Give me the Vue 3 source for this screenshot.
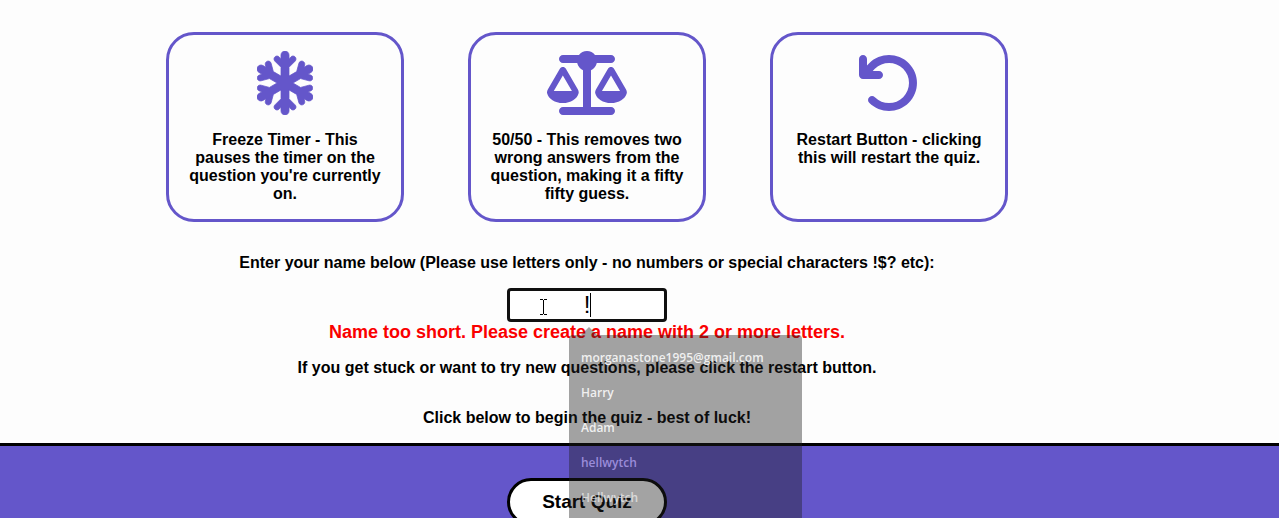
<script setup>
import { ref } from 'vue'

const playerName = ref('!')

const helpers = [
  {
    text: "Freeze Timer - This pauses the timer on the question you're currently on.",
    icon: 'snowflake',
  },
  {
    text: '50/50 - This removes two wrong answers from the question, making it a fifty fifty guess.',
    icon: 'scale',
  },
  {
    text: 'Restart Button - clicking this will restart the quiz.',
    icon: 'restart',
  },
]

const suggestions = [
  { text: 'morganastone1995@gmail.com', tone: 'bright' },
  { text: 'Harry', tone: 'bright' },
  { text: 'Adam', tone: 'bright' },
  { text: 'hellwytch', tone: 'tinted' },
  { text: 'Hellwytch', tone: 'faint' },
]
</script>

<template>
  <main class="page">
    <section class="intro">
      <div class="cards">
        <article v-for="helper in helpers" :key="helper.icon" class="card">
          <svg v-if="helper.icon === 'snowflake'" class="icon" viewBox="0 0 448 512" aria-hidden="true">
            <path fill="currentColor" stroke="currentColor" stroke-width="6" d="M224 0c17.7 0 32 14.3 32 32V62.1l15-15c9.4-9.4 24.6-9.4 33.9 0s9.4 24.6 0 33.9l-49 49v70.3l61.4-35.8 17.7-66.1c3.4-12.8 16.6-20.4 29.4-17s20.4 16.6 17 29.4l-5.2 19.3 23.6-13.8c15.3-8.9 34.9-3.7 43.8 11.5s3.8 34.9-11.5 43.8l-25.3 14.8 21.7 5.8c12.8 3.4 20.4 16.6 17 29.4s-16.6 20.4-29.4 17l-67.7-18.1L287.5 256l60.9 35.5 67.7-18.1c12.8-3.4 26 4.2 29.4 17s-4.2 26-17 29.4l-21.7 5.8 25.3 14.8c15.3 8.9 20.4 28.5 11.5 43.8s-28.5 20.4-43.8 11.5l-23.6-13.8 5.2 19.3c3.4 12.8-4.2 26-17 29.4s-26-4.2-29.4-17l-17.7-66.1L256 311.7v70.3l49 49c9.4 9.4 9.4 24.6 0 33.9s-24.6 9.4-33.9 0l-15-15V480c0 17.7-14.3 32-32 32s-32-14.3-32-32V449.9l-15 15c-9.4 9.4-24.6 9.4-33.9 0s-9.4-24.6 0-33.9l49-49V311.7l-61.4 35.8-17.7 66.1c-3.4 12.8-16.6 20.4-29.4 17s-20.4-16.6-17-29.4l5.2-19.3L48.1 395.6c-15.3 8.9-34.9 3.7-43.8-11.5s-3.7-34.9 11.5-43.8l25.3-14.8-21.7-5.8c-12.8-3.4-20.4-16.6-17-29.4s16.6-20.4 29.4-17l67.7 18.1L160.5 256 99.6 220.5 31.9 238.6c-12.8 3.4-26-4.2-29.4-17s4.2-26 17-29.4l21.7-5.8L15.9 171.6C.6 162.7-4.5 143.1 4.4 127.9s28.5-20.4 43.8-11.5l23.6 13.8-5.2-19.3c-3.4-12.8 4.2-26 17-29.4s26 4.2 29.4 17l17.7 66.1L192 200.3V130L143 81c-9.4-9.4-9.4-24.6 0-33.9s24.6-9.4 33.9 0l15 15V32c0-17.7 14.3-32 32-32z" />
          </svg>
          <svg v-else-if="helper.icon === 'scale'" class="icon" viewBox="0 0 640 512" aria-hidden="true">
            <path fill="currentColor" d="M384 32H512c17.7 0 32 14.3 32 32s-14.3 32-32 32H398.4c-5.2 25.8-22.9 47.1-46.4 57.3V448H512c17.7 0 32 14.3 32 32s-14.3 32-32 32H320 128c-17.7 0-32-14.3-32-32s14.3-32 32-32H288V153.3c-23.5-10.3-41.2-31.6-46.4-57.3H128c-17.7 0-32-14.3-32-32s14.3-32 32-32H256c14.6-19.4 37.8-32 64-32s49.4 12.6 64 32zm55.6 288H584.4L512 195.8 439.6 320zM512 416c-62.9 0-115.2-34-126-78.9c-2.6-11 1-22.3 6.7-32.1l95.2-163.2c5-8.6 14.2-13.8 24.1-13.8s19.1 5.3 24.1 13.8l95.2 163.2c5.7 9.8 9.3 21.1 6.7 32.1C627.2 382 574.9 416 512 416zM126.8 195.8L54.4 320H199.3L126.8 195.8zM.9 337.1c-2.6-11 1-22.3 6.7-32.1l95.2-163.2c5-8.6 14.2-13.8 24.1-13.8s19.1 5.3 24.1 13.8l95.2 163.2c5.7 9.8 9.3 21.1 6.7 32.1C242 382 189.7 416 126.8 416S11.7 382 .9 337.1z" />
          </svg>
          <svg v-else class="icon" viewBox="0 0 512 512" aria-hidden="true">
            <path fill="currentColor" d="M125.7 160H176c17.7 0 32 14.3 32 32s-14.3 32-32 32H48c-17.7 0-32-14.3-32-32V64c0-17.7 14.3-32 32-32s32 14.3 32 32v51.2L97.6 97.6c87.5-87.5 229.3-87.5 316.8 0s87.5 229.3 0 316.8s-229.3 87.5-316.8 0c-12.5-12.5-12.5-32.8 0-45.3s32.8-12.5 45.3 0c62.5 62.5 163.8 62.5 226.3 0s62.5-163.8 0-226.3s-163.8-62.5-226.3 0L125.7 160z" />
          </svg>
          <p class="card-text">{{ helper.text }}</p>
        </article>
      </div>

      <label class="prompt" for="player-name">Enter your name below (Please use letters only - no numbers or special characters !$? etc):</label>
      <div class="field">
        <input id="player-name" v-model="playerName" class="name-input" type="text" autocomplete="off" aria-describedby="name-error" />
        <span class="caret"></span>
        <svg class="pointer" viewBox="0 0 7 16" aria-hidden="true">
          <path d="M0 .5h3M4 .5h3M3.5 1v14M0 15.5h3M4 15.5h3" fill="none" stroke="#000" />
        </svg>
        <ul class="suggestions">
          <li v-for="item in suggestions" :key="item.text" :class="['suggestion', item.tone]">{{ item.text }}</li>
        </ul>
      </div>
      <p id="name-error" class="error">Name too short. Please create a name with 2 or more letters.</p>
      <p class="stuck">If you get stuck or want to try new questions, please click the restart button.</p>
      <p class="begin">Click below to begin the quiz - best of luck!</p>
    </section>

    <footer class="footer">
      <button class="start" type="button">Start Quiz</button>
    </footer>
  </main>
</template>

<style>
body {
  margin: 0;
  background: #fdfdfd;
}
</style>

<style scoped>
.page {
  display: flex;
  flex-direction: column;
  height: 100vh;
  overflow: hidden;
  font-family: "Liberation Sans", Arial, sans-serif;
  font-size: 16px;
  font-weight: bold;
  line-height: 18px;
  color: #000;
  text-align: center;
}

p {
  margin: 0;
}

.intro,
.footer {
  box-sizing: border-box;
  display: flex;
  flex-direction: column;
  align-items: center;
  padding-right: 105px;
}

.intro {
  flex: none;
  padding-top: 32px;
  padding-bottom: 16px;
}

.cards {
  display: flex;
  justify-content: center;
  gap: 64px;
  margin-bottom: 32px;
}

.card {
  box-sizing: border-box;
  display: flex;
  flex-direction: column;
  align-items: center;
  gap: 16px;
  width: 238px;
  padding: 16px;
  border: 3px solid #6456ca;
  border-radius: 28px;
}

.icon {
  height: 64px;
  color: #6456ca;
}

.prompt {
  margin-bottom: 16px;
}

.field {
  position: relative;
  width: 160px;
}

.name-input {
  display: block;
  box-sizing: border-box;
  width: 100%;
  height: 34px;
  padding: 0;
  border: 3px solid #101010;
  border-radius: 4px;
  outline: none;
  background: #fff;
  font-family: inherit;
  font-size: 24px;
  text-align: center;
}

.caret {
  position: absolute;
  top: 5px;
  left: 83px;
  width: 1px;
  height: 24px;
  background: #000;
}

.pointer {
  position: absolute;
  top: 11px;
  left: 33px;
  width: 7px;
  height: 16px;
}

.suggestions {
  position: absolute;
  z-index: 2;
  top: 47px;
  left: 62px;
  box-sizing: border-box;
  width: 233px;
  margin: 0;
  padding: 5px 12px 16px;
  border-radius: 4px;
  background: rgba(31, 31, 31, 0.41);
  list-style: none;
  text-align: left;
  font-family: "Open Sans", "Noto Sans", sans-serif;
  font-size: 12px;
  font-weight: 600;
  line-height: 35px;
}

.suggestions::before {
  content: "";
  position: absolute;
  bottom: 100%;
  left: 12px;
  border: 8px solid transparent;
  border-top: 0;
  border-bottom-color: rgba(31, 31, 31, 0.41);
}

.bright {
  color: rgba(255, 255, 255, 0.85);
}

.tinted {
  color: #9a8cda;
}

.faint {
  color: rgba(255, 255, 255, 0.6);
}

.error {
  margin-bottom: 16px;
  font-size: 18px;
  line-height: 21px;
  color: #fa0000;
}

.stuck {
  margin-bottom: 32px;
}

.footer {
  flex: none;
  padding-top: 32px;
  padding-bottom: 32px;
  border-top: 3px solid #000;
  background: #6456ca;
}

.start {
  width: 160px;
  height: 48px;
  padding: 0;
  border: 3px solid #000;
  border-radius: 28px;
  background: #fff;
  font-family: inherit;
  font-size: 19px;
  font-weight: bold;
  color: #000;
}
</style>
